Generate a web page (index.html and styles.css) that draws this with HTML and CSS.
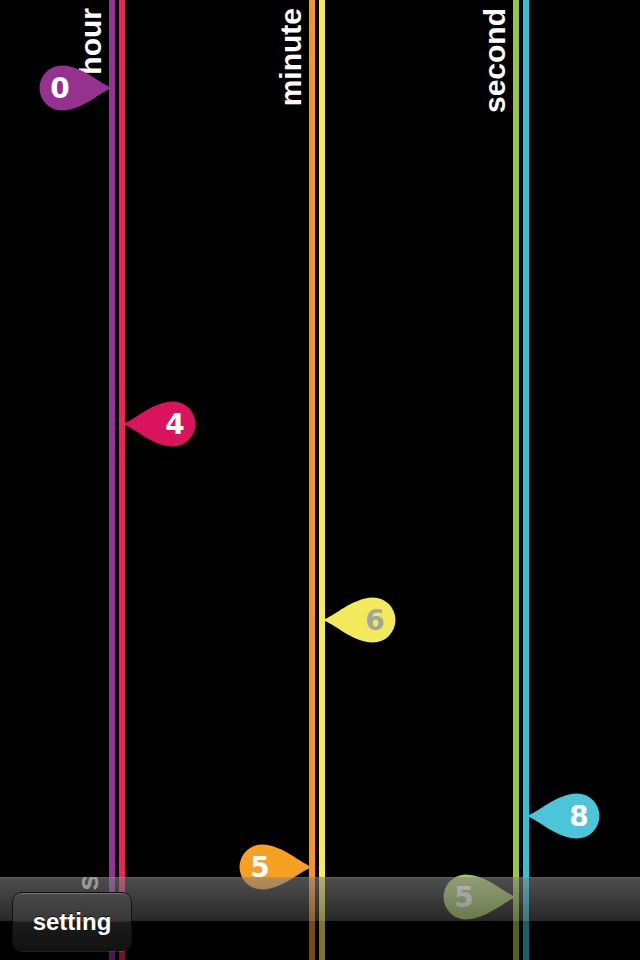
FILE: index.html
```html
<!DOCTYPE html>
<html>
<head>
<meta charset="utf-8">
<link rel="stylesheet" href="styles.css">
</head>
<body>
<div class="screen">
  <div class="tracks">
    <div class="group hour">
      <span class="label">hour</span>
      <div class="drop drop-r" style="top:65px">
        <svg class="drop-shape f-purple" viewBox="0 0 74 46"><path d="M73.5 23 C61 19 45 1.5 23 0.5 A22.5 22.5 0 0 0 23 45.5 C45 44.5 61 27 73.5 23 Z"/></svg>
        <span class="digit">0</span>
      </div>
      <div class="drop drop-l" style="top:401px">
        <svg class="drop-shape f-red" viewBox="0 0 74 46"><path d="M73.5 23 C61 19 45 1.5 23 0.5 A22.5 22.5 0 0 0 23 45.5 C45 44.5 61 27 73.5 23 Z"/></svg>
        <span class="digit">4</span>
      </div>
      <div class="line c-purple"></div>
      <div class="line c-red"></div>
    </div>
    <div class="group minute">
      <span class="label">minute</span>
      <div class="drop drop-r" style="top:844px">
        <svg class="drop-shape f-orange" viewBox="0 0 74 46"><path d="M73.5 23 C61 19 45 1.5 23 0.5 A22.5 22.5 0 0 0 23 45.5 C45 44.5 61 27 73.5 23 Z"/></svg>
        <span class="digit">5</span>
      </div>
      <div class="drop drop-l" style="top:597px">
        <svg class="drop-shape f-yellow" viewBox="0 0 74 46"><path d="M73.5 23 C61 19 45 1.5 23 0.5 A22.5 22.5 0 0 0 23 45.5 C45 44.5 61 27 73.5 23 Z"/></svg>
        <span class="digit digit-gray">6</span>
      </div>
      <div class="line c-orange"></div>
      <div class="line c-yellow"></div>
    </div>
    <div class="group second">
      <span class="label">second</span>
      <div class="drop drop-r" style="top:874px">
        <svg class="drop-shape f-green" viewBox="0 0 74 46"><path d="M73.5 23 C61 19 45 1.5 23 0.5 A22.5 22.5 0 0 0 23 45.5 C45 44.5 61 27 73.5 23 Z"/></svg>
        <span class="digit">5</span>
      </div>
      <div class="drop drop-l" style="top:793px">
        <svg class="drop-shape f-cyan" viewBox="0 0 74 46"><path d="M73.5 23 C61 19 45 1.5 23 0.5 A22.5 22.5 0 0 0 23 45.5 C45 44.5 61 27 73.5 23 Z"/></svg>
        <span class="digit">8</span>
      </div>
      <div class="line c-green"></div>
      <div class="line c-cyan"></div>
    </div>
  </div>
  <div class="toolbar">
    <span class="ghost">s</span>
    <button class="btn">setting</button>
  </div>
</div>
</body>
</html>
```
FILE: styles.css
```css
html, body {
  margin: 0;
  padding: 0;
  background: #000;
}
.screen {
  position: relative;
  width: 640px;
  height: 960px;
  overflow: hidden;
  background: #000;
  font-family: "Liberation Sans", Arial, sans-serif;
}
.tracks {
  display: flex;
  height: 960px;
  padding-left: 109px;
  box-sizing: border-box;
}
.group {
  position: relative;
  display: flex;
  gap: 4px;
}
.minute { margin-left: 184px; }
.second { margin-left: 188px; }
.line {
  position: relative;
  z-index: 1;
  width: 6px;
  height: 960px;
}
.c-purple { background: #93339a; }
.c-red { background: #e5275a; }
.c-orange { background: #f7931e; }
.c-yellow { background: #f4ec50; }
.c-green { background: #9bc63f; }
.c-cyan { background: #2ac3da; }

.label {
  position: absolute;
  top: 8px;
  right: calc(100% + 3px);
  writing-mode: vertical-rl;
  transform: rotate(180deg);
  color: #fff;
  font-weight: bold;
  font-size: 30px;
  line-height: 30px;
  white-space: nowrap;
}

.drop {
  position: absolute;
  width: 74px;
  height: 46px;
}
.drop-r { left: -70px; }
.drop-l { left: 13px; }
.drop-shape {
  display: block;
  width: 74px;
  height: 46px;
}
.drop-l .drop-shape { transform: scaleX(-1); }
.f-purple { fill: #96318f; }
.f-red { fill: #d9145c; }
.f-orange { fill: #f7a021; }
.f-yellow { fill: #f2ea5a; }
.f-green { fill: #a3c75a; }
.f-cyan { fill: #4cc5d9; }

.digit {
  position: absolute;
  top: 1px;
  width: 46px;
  height: 46px;
  line-height: 46px;
  text-align: center;
  color: #fff;
  font-family: "DejaVu Sans", sans-serif;
  font-weight: bold;
  font-size: 28px;
}
.drop-r .digit { left: -2px; }
.drop-l .digit { left: 30px; }
.digit-gray { color: #a4a4a4; }

.toolbar {
  position: absolute;
  z-index: 2;
  left: 0;
  bottom: 0;
  width: 640px;
  height: 83px;
  overflow: hidden;
  display: flex;
  align-items: flex-start;
  padding: 15px 0 0 12px;
  box-sizing: border-box;
  background: linear-gradient(to bottom,
    rgba(150,150,150,0.7) 0px,
    rgba(130,130,130,0.6) 1px,
    rgba(100,100,100,0.6) 22px,
    rgba(66,66,66,0.6) 44px,
    rgba(0,0,0,0.5) 44px,
    rgba(0,0,0,0.5) 100%);
}
.ghost {
  position: absolute;
  left: 73px;
  top: -3px;
  writing-mode: vertical-rl;
  transform: rotate(180deg);
  color: #9a9a9a;
  font-weight: bold;
  font-size: 30px;
  line-height: 30px;
}
.btn {
  position: relative;
  z-index: 1;
  width: 120px;
  height: 59px;
  margin: 0;
  padding: 0;
  border: 1px solid #101010;
  border-radius: 10px;
  background: linear-gradient(to bottom,
    #5c5c5c 0px,
    #474747 2px,
    #383838 28px,
    #1b1b1b 29px,
    #121212 100%);
  box-shadow: inset 0 1px 0 rgba(255,255,255,0.15), 0 1px 0 rgba(255,255,255,0.12);
  color: #fff;
  font-family: "Liberation Sans", Arial, sans-serif;
  font-weight: bold;
  font-size: 24px;
  line-height: 57px;
  text-align: center;
  text-shadow: 0 -1px 0 rgba(0,0,0,0.7);
}
```
